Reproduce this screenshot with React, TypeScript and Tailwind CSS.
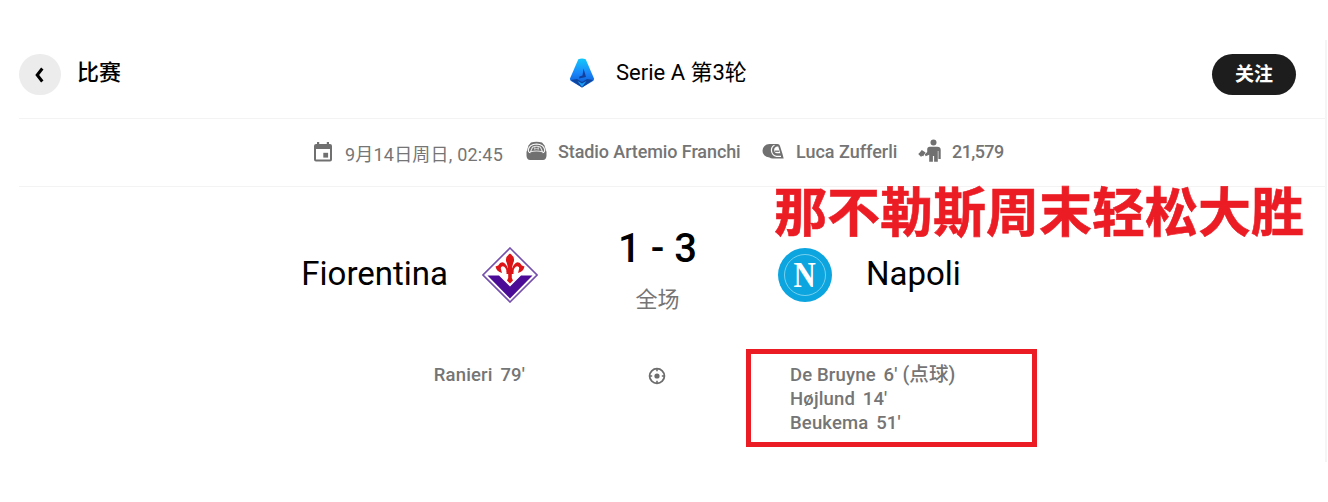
import React from 'react';

const scorersHome = ["Ranieri 79'"];
const scorersAway = ["Højlund 14'", "Beukema 51'"];

const SerieALogo = () => (
  <svg width="26" height="30" viewBox="0 0 26 30">
    <defs>
      <linearGradient id="serieA" x1="0" y1="0" x2="0" y2="1">
        <stop offset="0" stopColor="#12c8fa" />
        <stop offset="0.5" stopColor="#1a86fa" />
        <stop offset="1" stopColor="#0b50c8" />
      </linearGradient>
    </defs>
    <path d="M9.3 1.2 Q13 0 16.7 1.2 L25 20.5 Q25.2 22 24 23 L13 29.5 L2 23 Q.8 22 1 20.5Z" fill="url(#serieA)" />
    <path d="M14.5 10.5 L17 19 L10 20.5 L10.5 18.5 L13.5 17.5Z" fill="#123f9c" />
    <path d="M2 22 L8 21 L13 24 L18 21 L24 22 L13 29.5Z" fill="#10459f" />
    <path d="M8.5 23 L13 25.5 L17.5 23 L13 29Z" fill="#1b9cf5" />
  </svg>
);

const CalendarIcon = () => (
  <svg width="18" height="20" viewBox="0 0 18 20" fill="#707070">
    <path
      fillRule="evenodd"
      d="M3 0h2.2v2h7.6V0H15v2h1a2 2 0 0 1 2 2v13.5a2 2 0 0 1-2 2H2a2 2 0 0 1-2-2V4a2 2 0 0 1 2-2h1zM2 7v10.5h14V7z"
    />
    <path d="M9.3 10.8h4.8v4.8H9.3z" />
  </svg>
);

const StadiumIcon = () => (
  <svg width="21" height="20" viewBox="0 0 21 20">
    <path d="M5 1.5Q10.5 0 16 1.5L18.5 4.5L20.5 11V15Q20 18.8 17 19H4Q1 18.8.5 15V11L2.5 4.5Z" fill="#707070" />
    <path
      d="M2.2 9Q3.3 3.2 10.5 3Q17.7 3.2 18.8 9Q18.5 11.6 16.5 11.8M4.5 11.8Q2.5 11.6 2.2 9"
      fill="none"
      stroke="#fff"
      strokeWidth="1.1"
    />
    <path d="M4.5 10.8L6.5 6.2Q10.5 4.4 14.5 6.2L16.5 10.8Q10.5 9.2 4.5 10.8Z" fill="none" stroke="#e6e6e6" strokeWidth="1.1" />
    <path d="M8 7.6h5M8.8 6v3.2M12.2 6v3.2" stroke="#d5d5d5" strokeWidth=".8" />
  </svg>
);

const WhistleIcon = () => (
  <svg width="22" height="17" viewBox="0 0 22 17">
    <path d="M7.5 1H15.5Q17.5 1 18 3L20.5 11L21.7 15.5H11.5Q9 15.8 7.5 14.5Q.5 13.5.5 7.8Q1 1.5 7.5 1Z" fill="#707070" />
    <path d="M12.5 2.2Q9 3.8 9.5 8Q10.2 12.7 14.5 13.3H19" fill="none" stroke="#fff" strokeWidth="1.2" />
    <path d="M12.2 6.5Q12.4 3.7 15.5 3.4L16.3 3.4L18.3 10.3H15Q12.2 9.9 12.2 6.5Z" fill="#fff" />
    <path d="M13 8.2h4.2" stroke="#707070" strokeWidth="1.3" />
  </svg>
);

const AttendanceIcon = () => (
  <svg width="23" height="23" viewBox="0 0 23 23" fill="#707070">
    <circle cx="15.5" cy="3.5" r="3" />
    <path d="M11.8 7.7H19.2Q22.7 7.7 22.7 11V20H20.4V12H19.8V22.8H16.1V17H14.9V22.8H11.2V15.8L7.6 17.2L6.8 15.2L9.2 13V10.5Q9.2 7.7 11.8 7.7Z" />
    <path d="M3.8 11L7.6 13.6L5.2 17.2L3.8 16.7L3.2 18L.2 14.9L1.8 13.6Z" />
  </svg>
);

const FiorentinaCrest = () => (
  <svg width="56" height="56" viewBox="0 0 56 56">
    <path d="M28 1L55 28L28 55L1 28Z" fill="#fff" stroke="#7650ad" strokeWidth="1.6" />
    <path d="M5.5 28.5H17L28 39.5L39 28.5H50.5L28 51.5Z" fill="#4b0b96" />
    <g fill="#dc1418">
      <path d="M28 6.5Q34 10.5 31.2 16Q30 19 30 24H26Q26 19 24.8 16Q22 10.5 28 6.5Z" />
      <path d="M24.8 25Q24 20 20.7 19.3Q18.5 19.5 18.8 21.5L20 26Q14.5 24.5 13.5 19.5L16.2 18.5Q18.5 14.2 22 15.7Q26 18.5 26.8 25Z" />
      <path d="M31.2 25Q32 20 35.3 19.3Q37.5 19.5 37.2 21.5L36 26Q41.5 24.5 42.5 19.5L39.8 18.5Q37.5 14.2 34 15.7Q30 18.5 29.2 25Z" />
      <path d="M24.5 23.5H31.5V27H29.8V31L31 33.5L28 36.5L25 33.5L26.2 31V27H24.5Z" />
    </g>
  </svg>
);

const NapoliCrest = () => (
  <div className="flex h-[54px] w-[54px] items-center justify-center rounded-full bg-[#0ca5df]">
    <div className="flex h-[42px] w-[42px] items-center justify-center rounded-full border border-[#75d0ee]">
      <span className="scale-x-[.88] font-['Liberation_Serif',serif] text-[35px] leading-none font-bold text-white">
        N
      </span>
    </div>
  </div>
);

const GoalIcon = () => (
  <svg width="18" height="18" viewBox="0 0 18 18">
    <circle cx="9" cy="9" r="7.4" fill="none" stroke="#6d6d6d" strokeWidth="1.8" />
    <path d="M9 2v2.2M9 13.8V16M2 9h2.2M13.8 9H16" stroke="#6d6d6d" strokeWidth="1.6" />
    <circle cx="9" cy="9" r="2.6" fill="#6d6d6d" />
  </svg>
);

const App: React.FC = () => {
  return (
    <div className="h-[502px] w-[1328px] overflow-hidden bg-white pt-10 pl-[19px] font-[Roboto,'Noto_Sans_CJK_SC',sans-serif] text-black">
      <div className="h-[422px] w-[1308px] border-r-2 border-[#f5f5f5]">
        <header className="flex h-[79px] border-b border-[#f3f3f3]">
          <div className="flex w-[550px] items-start pt-[14px]">
            <button className="flex h-[41px] w-[42px] items-center justify-center rounded-full bg-[#ececec]">
              <svg width="12" height="16" viewBox="0 0 12 16">
                <path d="M8.3 1.5L3.2 8L8.3 14.5" fill="none" stroke="#000" strokeWidth="3" />
              </svg>
            </button>
            <h1 className="ml-[16px] pt-[4px] text-[22px] leading-[30px] font-medium">比赛</h1>
          </div>
          <div className="flex w-[643px] items-start pt-[18px]">
            <SerieALogo />
            <span className="ml-[21px] text-[22px] leading-[30px] whitespace-nowrap">
              Serie A 第3轮
            </span>
          </div>
          <button className="mt-[14px] h-[41px] w-[84px] rounded-full bg-[#1d1d1d] text-[19px] leading-[39px] font-bold text-white">
            关注
          </button>
        </header>

        <div className="flex h-[68px] items-start border-b border-[#f3f3f3] pt-[20px] pl-[295px] text-[18px] leading-[26px] font-medium whitespace-nowrap text-[#757575]">
          <div className="flex w-[212px] items-start">
            <div className="pt-[3px]">
              <CalendarIcon />
            </div>
            <span className="ml-[13px] pt-[3px] font-normal tracking-[.2px]">
              9月14日周日, 02:45
            </span>
          </div>
          <div className="flex w-[236px] items-start">
            <div className="pt-[2px]">
              <StadiumIcon />
            </div>
            <span className="ml-[11px] tracking-[-.1px]">Stadio Artemio Franchi</span>
          </div>
          <div className="flex w-[156px] items-start">
            <div className="pt-[4px]">
              <WhistleIcon />
            </div>
            <span className="ml-[12px]">Luca Zufferli</span>
          </div>
          <div className="flex items-start">
            <AttendanceIcon />
            <span className="ml-[11px] tracking-[-.6px]">21,579</span>
          </div>
        </div>

        <div className="flex h-[162px] items-start pt-[38px]">
          <div className="w-[429px] pt-[29px] text-right text-[33px] leading-[40px]">
            Fiorentina
          </div>
          <div className="ml-[34px] pt-[22px]">
            <FiorentinaCrest />
          </div>
          <div className="ml-[42px] flex w-[155px] flex-col items-center">
            <span className="text-[40px] leading-[48px] font-medium">1 - 3</span>
            <span className="mt-[11px] text-[22px] leading-[32px] text-[#757575]">全场</span>
          </div>
          <div className="ml-[43px] pt-[23px]">
            <NapoliCrest />
          </div>
          <div className="ml-[34px] pt-[29px] text-[33px] leading-[40px]">Napoli</div>
        </div>

        <div className="flex items-start text-[18.5px] leading-[24px] font-medium tracking-[.15px] text-[#757575] [word-spacing:3px]">
          <ul className="w-[506px] pt-[14px] text-right">
            {scorersHome.map((scorer) => (
              <li key={scorer}>{scorer}</li>
            ))}
          </ul>
          <div className="ml-[123px] pt-[18px]">
            <GoalIcon />
          </div>
          <ul className="ml-[80px] h-[98px] w-[291px] border-[5px] border-[#ec1c24] pt-[9px] pl-[39px]">
            <li className="h-6 whitespace-nowrap">
              <span className="[word-spacing:0px]">De Bruyne</span> 6'
              <span className="ml-[5px] text-[19.5px]">(点球)</span>
            </li>
            {scorersAway.map((scorer) => (
              <li key={scorer}>{scorer}</li>
            ))}
          </ul>
        </div>
      </div>

      <div className="absolute top-[175px] left-[774px] text-[53px] leading-[78px] font-bold whitespace-nowrap text-[#ec1c24] [-webkit-text-stroke:0.6px_#ec1c24]">
        那不勒斯周末轻松大胜
      </div>
    </div>
  );
};

export default App;
